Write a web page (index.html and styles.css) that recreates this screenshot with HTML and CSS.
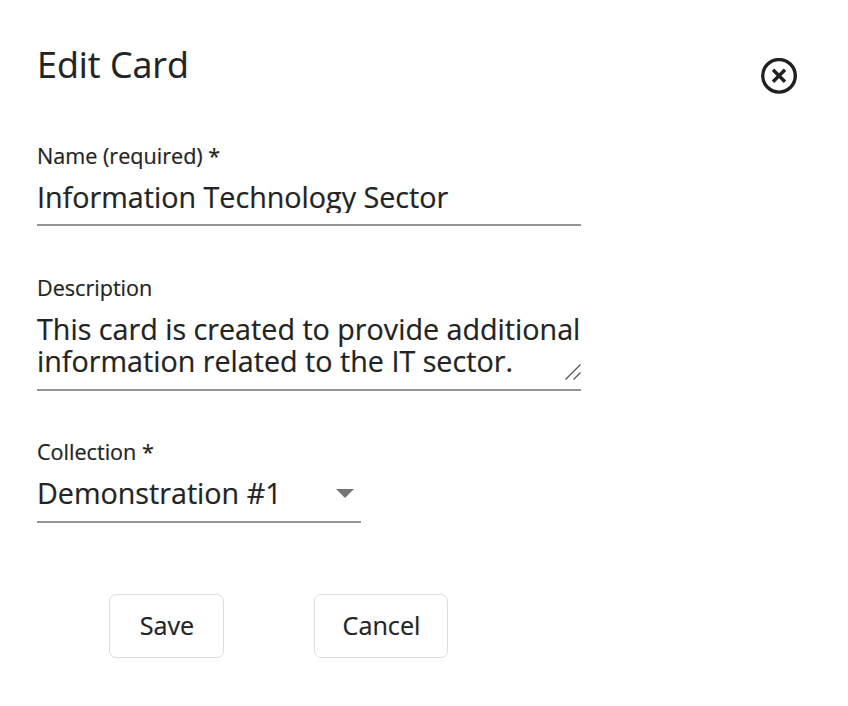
FILE: index.html
```html
<!DOCTYPE html>
<html lang="en">
<head>
<meta charset="utf-8">
<title>Edit Card</title>
<link rel="stylesheet" href="styles.css">
</head>
<body>
<main class="dialog">
  <header class="header">
    <h1 class="title">Edit Card</h1>
    <svg class="close" viewBox="0 0 36 36" role="img" aria-label="Close"><circle cx="18" cy="17.8" r="16.3"/><path d="M12 11.8l12 12M24 11.8l-12 12"/></svg>
  </header>
  <section class="field name">
    <div class="label">Name (required) *</div>
    <div class="value clipped">Information Technology Sector</div>
  </section>
  <section class="field description">
    <div class="label">Description</div>
    <div class="value">This card is created to provide additional<br>information related to the IT sector.</div>
    <svg class="grip" viewBox="0 0 16 16"><path d="M.5 15.5l15-15M8.5 15.5l7-7"/></svg>
  </section>
  <section class="field collection">
    <div class="label">Collection *</div>
    <div class="value select"><span>Demonstration #1</span><svg class="arrow" viewBox="0 0 18 9"><path d="M0 0h18L9 9z"/></svg></div>
  </section>
  <footer class="actions">
    <button class="button save">Save</button>
    <button class="button cancel">Cancel</button>
  </footer>
</main>
</body>
</html>
```
FILE: styles.css
```css
* { box-sizing: border-box; }
body { margin: 0; background: #fff; color: #222323; font-family: "Open Sans", sans-serif; -webkit-text-stroke: .2px #222323; }
.dialog { width: 848px; height: 706px; padding: 40px 51px 0 37px; }
.header { display: flex; justify-content: space-between; height: 103px; }
.title { margin: 0; font-size: 35.8px; line-height: 48px; font-weight: 400; }
.close { width: 36px; height: 36px; margin-top: 18px; fill: none; stroke: #212121; stroke-width: 3.4; }
.field { position: relative; width: 544px; border-bottom: 2px solid #949494; white-space: nowrap; }
.label { font-size: 21.6px; line-height: 26px; }
.value { margin-top: 12px; font-size: 28.7px; line-height: 32px; }
.name { height: 83px; }
.clipped { height: 32px; overflow: hidden; }
.description { height: 116px; margin-top: 49px; }
.grip { position: absolute; right: 0; bottom: 9px; width: 16px; height: 16px; fill: none; stroke: #555; stroke-width: 1.3; }
.collection { width: 324px; height: 84px; margin-top: 48px; }
.select { display: flex; justify-content: space-between; align-items: center; padding-right: 7px; }
.arrow { width: 18px; height: 9px; fill: #757575; }
.actions { display: flex; gap: 90px; margin: 71px 0 0 72px; }
.button { height: 64px; padding: 0 0 2px 1px; border: 1px solid #dedede; border-radius: 7px; background: #fff; color: #222323; font: 25.2px "Open Sans", sans-serif; -webkit-text-stroke: inherit; }
.save { width: 115px; }
.cancel { width: 134px; }
```
